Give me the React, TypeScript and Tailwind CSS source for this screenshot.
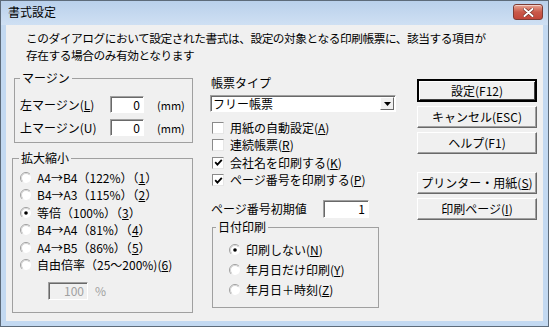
import type { ReactNode } from "react";

function Key({ children }: { children: ReactNode }) {
  return <span className="underline underline-offset-[1px]">{children}</span>;
}

function Radio({ checked = false }: { checked?: boolean }) {
  return (
    <svg width="12" height="12" viewBox="0 0 12 12" className="shrink-0">
      <circle cx="6" cy="6" r="5" fill="#fff" />
      <path d="M9.9 2.1A5.5 5.5 0 0 0 2.1 9.9" fill="none" stroke="#a0a0a0" />
      <path d="M9.2 2.8A4.5 4.5 0 0 0 2.8 9.2" fill="none" stroke="#d4d4d4" />
      {checked ? <circle cx="6" cy="6" r="1.8" fill="#000" /> : null}
    </svg>
  );
}

function Check({ checked = false }: { checked?: boolean }) {
  return (
    <span className="flex h-[12px] w-[12px] shrink-0 items-center justify-center border border-t-[#8a8a8a] border-l-[#8a8a8a] border-r-[#e6e6e6] border-b-[#e6e6e6] bg-white">
      {checked ? (
        <svg width="9" height="9" viewBox="0 0 9 9">
          <path d="M1.2 4.2 L3.4 6.6 L7.8 1.8" fill="none" stroke="#000" strokeWidth="1.8" />
        </svg>
      ) : null}
    </span>
  );
}

function Field({ value, className, disabled = false }: { value: string; className: string; disabled?: boolean }) {
  return (
    <div
      className={`flex items-center justify-end border border-t-[#a0a0a0] border-l-[#a0a0a0] border-r-white border-b-white pr-[3px] shadow-[inset_1px_1px_0_#696969] ${
        disabled ? "bg-[#f0f0f0] text-[#a0a0a0]" : "bg-white"
      } ${className}`}
    >
      {value}
    </div>
  );
}

function Btn({ children, primary = false, className = "" }: { children: ReactNode; primary?: boolean; className?: string }) {
  return (
    <div
      className={`flex h-[22px] items-center justify-center bg-[#f0f0f0] ${
        primary
          ? "border-2 border-black shadow-[inset_1px_1px_0_#fff,inset_-1px_-1px_0_#404040]"
          : "border border-t-white border-l-white border-r-[#696969] border-b-[#696969] shadow-[inset_-1px_-1px_0_#a0a0a0]"
      } ${className}`}
    >
      {children}
    </div>
  );
}

function RadioRow({ checked, children, className }: { checked?: boolean; children: ReactNode; className: string }) {
  return (
    <div className={`flex items-center gap-[5px] ${className}`}>
      <Radio checked={checked} />
      <span className="whitespace-nowrap">{children}</span>
    </div>
  );
}

function CheckRow({ checked, children }: { checked?: boolean; children: ReactNode }) {
  return (
    <div className="flex h-[17.5px] items-center gap-[6px]">
      <Check checked={checked} />
      <span className="whitespace-nowrap">{children}</span>
    </div>
  );
}

function CloseButton() {
  return (
    <div className="mt-[3px] flex h-[16px] w-[30px] items-center justify-center self-start rounded-[3px] border border-[#7d3b34] bg-gradient-to-b from-[#e8a493] via-[#c9594a] to-[#c2463a] shadow-[inset_0_1px_0_rgba(255,255,255,0.5)]">
      <svg width="11" height="9" viewBox="0 0 11 9">
        <path d="M1.5 1 L9.5 8 M9.5 1 L1.5 8" stroke="#6b2a22" strokeWidth="3.2" strokeLinecap="round" />
        <path d="M1.5 1 L9.5 8 M9.5 1 L1.5 8" stroke="#fff" strokeWidth="2" strokeLinecap="round" />
      </svg>
    </div>
  );
}

export default function App() {
  return (
    <div className="flex h-[327px] w-[549px] flex-col border border-[#5d6b7a] bg-[#c3d9f1] font-['Noto_Sans_CJK_JP',sans-serif] text-[12px] leading-[14px] text-black">
      <div className="flex h-[24px] shrink-0 items-center justify-between bg-gradient-to-b from-[#b9d0eb] to-[#cfe0f3] pl-[7px] pr-[5px]">
        <span className="mb-[2px]">書式設定</span>
        <CloseButton />
      </div>

      <div className="mx-[5px] mb-[5px] flex flex-1 flex-col bg-[#f0f0f0]">
        <div className="flex flex-col pl-[20px] pt-[4px] text-[11.7px] leading-[17px] tracking-[-0.45px]">
          <div className="h-[17px] whitespace-nowrap">
            このダイアログにおいて設定された書式は、設定の対象となる印刷帳票に、該当する項目が
          </div>
          <div className="h-[17px] whitespace-nowrap">存在する場合のみ有効となります</div>
        </div>

        <div className="mt-[8px] flex pl-[8px]">
          {/* left column */}
          <div className="flex w-[179px] flex-col">
            <fieldset className="border border-[#a0a0a0]">
              <legend className="ml-[5px] px-[2px]">マージン</legend>
              <div className="flex flex-col gap-[6px] pb-[6px] pl-[5px] pt-[11px]">
                <div className="flex items-center">
                  <span className="w-[90px] whitespace-nowrap">
                    左マージン(<Key>L</Key>)
                  </span>
                  <Field value="0" className="h-[17px] w-[34px]" />
                  <span className="ml-[13px] text-[11px]">(mm)</span>
                </div>
                <div className="flex items-center">
                  <span className="w-[90px] whitespace-nowrap">上マージン(U)</span>
                  <Field value="0" className="h-[17px] w-[34px]" />
                  <span className="ml-[13px] text-[11px]">(mm)</span>
                </div>
              </div>
            </fieldset>

            <fieldset className="-ml-[2px] mt-[8px] w-[181px] border border-[#a0a0a0]">
              <legend className="ml-[6px] px-[2px]">拡大縮小</legend>
              <div className="flex flex-col pb-[12px] pl-[7px] pt-[4px]">
                <RadioRow className="h-[17.5px]">
                  A4→B4（122%）（<Key>1</Key>）
                </RadioRow>
                <RadioRow className="h-[17.5px]">
                  B4→A3（115%）（<Key>2</Key>）
                </RadioRow>
                <RadioRow checked className="h-[17.5px]">
                  等倍（100%）（<Key>3</Key>）
                </RadioRow>
                <RadioRow className="h-[17.5px]">
                  B4→A4（81%）（<Key>4</Key>）
                </RadioRow>
                <RadioRow className="h-[17.5px]">
                  A4→B5（86%）（<Key>5</Key>）
                </RadioRow>
                <RadioRow className="h-[17.5px]">
                  自由倍率（25～200%)(<Key>6</Key>)
                </RadioRow>
                <div className="mt-[8px] flex items-center pl-[28px]">
                  <Field value="100" disabled className="h-[18px] w-[40px]" />
                  <span className="ml-[7px] text-[#a0a0a0]">%</span>
                </div>
              </div>
            </fieldset>
          </div>

          {/* middle column */}
          <div className="ml-[17px] flex w-[186px] flex-col pt-[5px]">
            <span className="pl-[1px]">帳票タイプ</span>
            <div className="mt-[5px] flex h-[17px] items-center justify-between border border-t-[#a0a0a0] border-l-[#a0a0a0] border-r-white border-b-white bg-white pl-[2px] pr-[1px] shadow-[inset_1px_1px_0_#696969]">
              <span>フリー帳票</span>
              <div className="flex h-[13px] w-[14px] items-center justify-center border border-t-white border-l-white border-r-[#696969] border-b-[#696969] bg-[#f0f0f0]">
                <svg width="7" height="4" viewBox="0 0 7 4">
                  <path d="M0 0 H7 L3.5 4 Z" fill="#000" />
                </svg>
              </div>
            </div>
            <div className="mt-[7px] flex flex-col pl-[2px]">
              <CheckRow>
                用紙の自動設定(<Key>A</Key>)
              </CheckRow>
              <CheckRow>
                連続帳票(<Key>R</Key>)
              </CheckRow>
              <CheckRow checked>
                会社名を印刷する(<Key>K</Key>)
              </CheckRow>
              <CheckRow checked>
                ページ番号を印刷する(<Key>P</Key>)
              </CheckRow>
            </div>
            <div className="mt-[11px] flex items-center pl-[1px]">
              <span className="w-[112px] whitespace-nowrap">ページ番号初期値</span>
              <Field value="1" className="h-[18px] w-[46px]" />
            </div>
            <fieldset className="ml-[2px] mt-[2px] w-[167px] border border-[#a0a0a0]">
              <legend className="ml-[3px] px-[2px]">日付印刷</legend>
              <div className="flex flex-col pb-[7px] pl-[16px] pt-[6px]">
                <RadioRow checked className="h-[20px]">
                  印刷しない(<Key>N</Key>)
                </RadioRow>
                <RadioRow className="h-[20px]">
                  年月日だけ印刷(<Key>Y</Key>)
                </RadioRow>
                <RadioRow className="h-[20px]">
                  年月日＋時刻(<Key>Z</Key>)
                </RadioRow>
              </div>
            </fieldset>
          </div>

          {/* right column */}
          <div className="ml-[21px] flex w-[120px] flex-col gap-[4px] pt-[8px]">
            <Btn primary className="h-[23px]">設定(F12)</Btn>
            <Btn>キャンセル(ESC)</Btn>
            <Btn>ヘルプ(F1)</Btn>
            <Btn className="mt-[14px]">
              プリンター・用紙(<Key>S</Key>)
            </Btn>
            <Btn>
              印刷ページ(<Key>I</Key>)
            </Btn>
          </div>
        </div>
      </div>
    </div>
  );
}
